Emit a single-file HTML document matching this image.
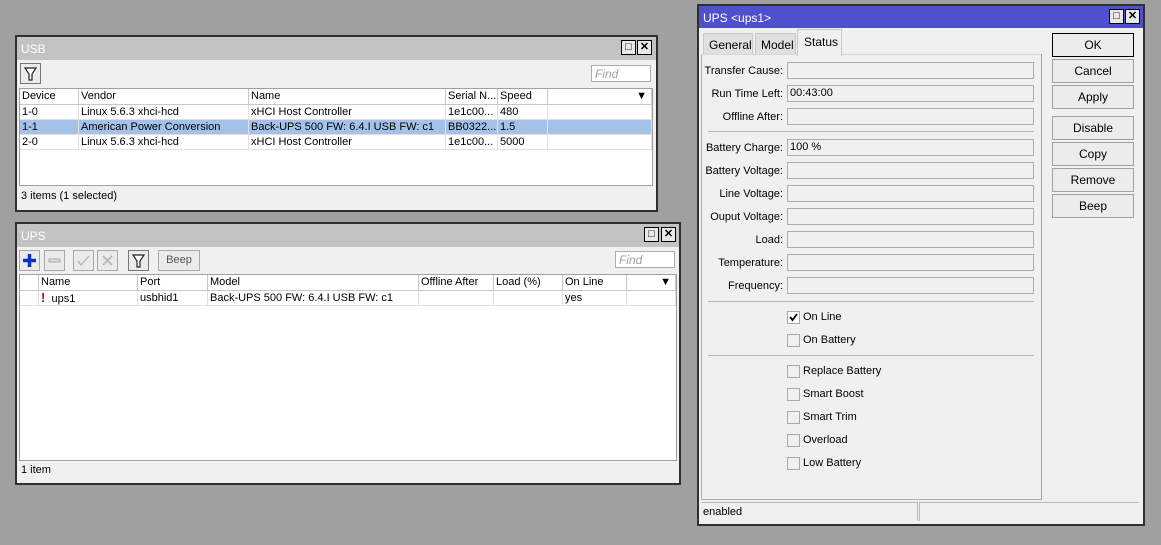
<!DOCTYPE html>
<html><head><style>
*{box-sizing:border-box}
body{margin:0;width:1161px;height:545px;background:#a0a0a0;font-family:"Liberation Sans",sans-serif;font-size:11px;color:#000;position:relative;overflow:hidden}
.a{position:absolute}
.win{position:absolute;background:#f0f0f0;border:2px solid #303030}
.title{position:absolute;left:0;right:0;top:0;height:23px;background:#c3c3c3;color:#fff;font-size:12px;padding:5px 0 0 4px}
.wb{position:absolute;top:3px;width:15px;height:15px;border:1px solid #000;background:#e8e8e8;font-size:11px;font-weight:bold;text-align:center;line-height:13px}
.tb{position:absolute;border:1px solid #a8a8a8;background:#ebebeb}
.find{position:absolute;background:#fff;border:1px solid #adadad;color:#a0a0a0;font-style:italic;padding:1px 3px;font-size:12px}
.grid{position:absolute;background:#fff;border:1px solid #a0a0a0}
.hd{position:absolute;height:16px;border-right:1px solid #c8c8c8;border-bottom:1px solid #c8c8c8;padding:1px 2px;white-space:nowrap;overflow:hidden;background:#fff}
.c{position:absolute;height:15px;border-right:1px solid #e0e0e0;border-bottom:1px solid #e0e0e0;padding:1px 2px;white-space:nowrap;overflow:hidden}
.lbl{position:absolute;width:84px;text-align:right;font-size:11px}
.in{position:absolute;left:787px;width:247px;height:17px;border:1px solid #adadad;background:#f0f0f0;padding:1px 2px}
.sep{position:absolute;left:708px;width:326px;height:1px;background:#b8b8b8}
.cb{position:absolute;left:787px;width:13px;height:13px;border:1px solid #a8a8a8;background:#f0f0f0}
.cl{position:absolute;left:803px}
.btn{position:absolute;left:1052px;width:82px;height:24px;border:1px solid #a0a0a0;background:#ececec;text-align:center;line-height:22px;font-size:12px}
</style></head><body>

<!-- USB window -->
<div class="win" style="left:15px;top:35px;width:643px;height:177px">
 <div class="title">USB</div>
 <div class="wb" style="left:604px">□</div><div class="wb" style="left:620px">✕</div>
</div>
<div class="tb" style="left:20px;top:63px;width:21px;height:21px;border-color:#777"><svg width="19" height="19"><path d="M4 4h11l-4 6v6h-3v-6z" fill="#fff" stroke="#222" stroke-width="1.2"/></svg></div>
<div class="find" style="left:591px;top:65px;width:60px;height:17px">Find</div>
<div class="grid" style="left:19px;top:88px;width:634px;height:98px"></div>
<div class="hd" style="left:20px;top:89px;width:59px">Device</div>
<div class="hd" style="left:79px;top:89px;width:170px">Vendor</div>
<div class="hd" style="left:249px;top:89px;width:197px">Name</div>
<div class="hd" style="left:446px;top:89px;width:52px">Serial N...</div>
<div class="hd" style="left:498px;top:89px;width:50px">Speed</div>
<div class="hd" style="left:548px;top:89px;width:104px;text-align:right;padding-right:4px">▼</div>
<div class="a" style="left:20px;top:120px;width:632px;height:15px;background:#a4c2e8"></div>
<div class="c" style="left:20px;top:105px;width:59px">1-0</div><div class="c" style="left:79px;top:105px;width:170px">Linux 5.6.3 xhci-hcd</div><div class="c" style="left:249px;top:105px;width:197px">xHCI Host Controller</div><div class="c" style="left:446px;top:105px;width:52px">1e1c00...</div><div class="c" style="left:498px;top:105px;width:50px">480</div><div class="c" style="left:548px;top:105px;width:104px"></div>
<div class="c" style="left:20px;top:120px;width:59px">1-1</div><div class="c" style="left:79px;top:120px;width:170px">American Power Conversion</div><div class="c" style="left:249px;top:120px;width:197px">Back-UPS 500 FW: 6.4.I USB FW: c1</div><div class="c" style="left:446px;top:120px;width:52px">BB0322...</div><div class="c" style="left:498px;top:120px;width:50px">1.5</div><div class="c" style="left:548px;top:120px;width:104px"></div>
<div class="c" style="left:20px;top:135px;width:59px">2-0</div><div class="c" style="left:79px;top:135px;width:170px">Linux 5.6.3 xhci-hcd</div><div class="c" style="left:249px;top:135px;width:197px">xHCI Host Controller</div><div class="c" style="left:446px;top:135px;width:52px">1e1c00...</div><div class="c" style="left:498px;top:135px;width:50px">5000</div><div class="c" style="left:548px;top:135px;width:104px"></div>
<div class="a" style="left:21px;top:190px">3 items (1 selected)</div>

<!-- UPS window -->
<div class="win" style="left:15px;top:222px;width:666px;height:263px">
 <div class="title">UPS</div>
 <div class="wb" style="left:627px">□</div><div class="wb" style="left:644px">✕</div>
</div>
<div class="tb" style="left:19px;top:250px;width:21px;height:21px"><svg width="19" height="19"><path d="M9.5 3v13M3 9.5h13" stroke="#1030c0" stroke-width="3.5"/></svg></div>
<div class="tb" style="left:44px;top:250px;width:21px;height:21px"><svg width="19" height="19"><rect x="4" y="8" width="11" height="3" fill="#ddd" stroke="#aaa"/></svg></div>
<div class="tb" style="left:73px;top:250px;width:21px;height:21px"><svg width="19" height="19"><path d="M4 10l3 4 8-9" fill="none" stroke="#bbb" stroke-width="1.5"/></svg></div>
<div class="tb" style="left:97px;top:250px;width:21px;height:21px"><svg width="19" height="19"><path d="M5 5l9 9M14 5l-9 9" stroke="#bbb" stroke-width="2"/></svg></div>
<div class="tb" style="left:128px;top:250px;width:21px;height:21px;border-color:#777"><svg width="19" height="19"><path d="M4 4h11l-4 6v6h-3v-6z" fill="#fff" stroke="#222" stroke-width="1.2"/></svg></div>
<div class="tb" style="left:158px;top:250px;width:42px;height:21px;text-align:center;line-height:19px;color:#555">Beep</div>
<div class="find" style="left:615px;top:251px;width:60px;height:17px">Find</div>
<div class="grid" style="left:19px;top:274px;width:658px;height:187px"></div>
<div class="hd" style="left:20px;top:275px;width:19px"></div>
<div class="hd" style="left:39px;top:275px;width:99px">Name</div>
<div class="hd" style="left:138px;top:275px;width:70px">Port</div>
<div class="hd" style="left:208px;top:275px;width:211px">Model</div>
<div class="hd" style="left:419px;top:275px;width:75px">Offline After</div>
<div class="hd" style="left:494px;top:275px;width:69px">Load (%)</div>
<div class="hd" style="left:563px;top:275px;width:64px">On Line</div>
<div class="hd" style="left:627px;top:275px;width:49px;text-align:right;padding-right:4px">▼</div>
<div class="c" style="left:20px;top:291px;width:19px"></div>
<div class="c" style="left:39px;top:291px;width:99px"><span style="color:#b01010;font-weight:bold;font-size:13px;line-height:11px">!</span>&nbsp;&nbsp;ups1</div>
<div class="c" style="left:138px;top:291px;width:70px">usbhid1</div>
<div class="c" style="left:208px;top:291px;width:211px">Back-UPS 500 FW: 6.4.I USB FW: c1</div>
<div class="c" style="left:419px;top:291px;width:75px"></div>
<div class="c" style="left:494px;top:291px;width:69px"></div>
<div class="c" style="left:563px;top:291px;width:64px">yes</div>
<div class="c" style="left:627px;top:291px;width:49px"></div>
<div class="a" style="left:21px;top:464px">1 item</div>

<!-- Dialog -->
<div class="win" style="left:697px;top:4px;width:448px;height:522px">
 <div class="title" style="background:#4f50ce;height:22px">UPS &lt;ups1&gt;</div>
 <div class="wb" style="left:410px">□</div><div class="wb" style="left:426px">✕</div>
</div>
<div class="a" style="left:703px;top:33px;width:50px;height:22px;background:#e0e0e0;border:1px solid #c8c8c8;font-size:12px;padding:4px 0 0 5px">General</div>
<div class="a" style="left:755px;top:33px;width:41px;height:22px;background:#e0e0e0;border:1px solid #c8c8c8;font-size:12px;padding:4px 0 0 5px">Model</div>
<div class="a" style="left:701px;top:54px;width:341px;height:446px;border:1px solid #b0b0b0;border-top:1px solid #d8d8d8;background:#f0f0f0"></div>
<div class="a" style="left:797px;top:29px;width:45px;height:27px;background:#f0f0f0;border:1px solid #c8c8c8;border-bottom:none;font-size:12px;padding:5px 0 0 6px">Status</div>
<div class="a" style="left:1041px;top:54px;width:1px;height:446px;background:#a0a0a0"></div>

<div class="lbl" style="left:699px;top:65px">Transfer Cause:</div><div class="in" style="top:62px"></div>
<div class="lbl" style="left:699px;top:88px">Run Time Left:</div><div class="in" style="top:85px">00:43:00</div>
<div class="lbl" style="left:699px;top:111px">Offline After:</div><div class="in" style="top:108px"></div>
<div class="sep" style="top:131px"></div>
<div class="lbl" style="left:699px;top:142px">Battery Charge:</div><div class="in" style="top:139px">100 %</div>
<div class="lbl" style="left:699px;top:165px">Battery Voltage:</div><div class="in" style="top:162px"></div>
<div class="lbl" style="left:699px;top:188px">Line Voltage:</div><div class="in" style="top:185px"></div>
<div class="lbl" style="left:699px;top:211px">Ouput Voltage:</div><div class="in" style="top:208px"></div>
<div class="lbl" style="left:699px;top:234px">Load:</div><div class="in" style="top:231px"></div>
<div class="lbl" style="left:699px;top:257px">Temperature:</div><div class="in" style="top:254px"></div>
<div class="lbl" style="left:699px;top:280px">Frequency:</div><div class="in" style="top:277px"></div>
<div class="sep" style="top:301px"></div>
<div class="cb" style="top:311px;background:#fff"><svg width="11" height="11"><path d="M2 5l2.5 3L9 2" fill="none" stroke="#000" stroke-width="1.8"/></svg></div><div class="cl" style="top:311px">On Line</div>
<div class="cb" style="top:334px"></div><div class="cl" style="top:334px">On Battery</div>
<div class="sep" style="top:355px"></div>
<div class="cb" style="top:365px"></div><div class="cl" style="top:365px">Replace Battery</div>
<div class="cb" style="top:388px"></div><div class="cl" style="top:388px">Smart Boost</div>
<div class="cb" style="top:411px"></div><div class="cl" style="top:411px">Smart Trim</div>
<div class="cb" style="top:434px"></div><div class="cl" style="top:434px">Overload</div>
<div class="cb" style="top:457px"></div><div class="cl" style="top:457px">Low Battery</div>

<div class="btn" style="top:33px;border:1px solid #000">OK</div>
<div class="btn" style="top:59px">Cancel</div>
<div class="btn" style="top:85px">Apply</div>
<div class="btn" style="top:116px">Disable</div>
<div class="btn" style="top:142px">Copy</div>
<div class="btn" style="top:168px">Remove</div>
<div class="btn" style="top:194px">Beep</div>

<div class="a" style="left:701px;top:502px;width:217px;height:19px;border-top:1px solid #b8b8b8;border-right:1px solid #b8b8b8;padding:3px 2px">enabled</div>
<div class="a" style="left:919px;top:502px;width:220px;height:19px;border-top:1px solid #b8b8b8;border-left:1px solid #b8b8b8"></div>
</body></html>
